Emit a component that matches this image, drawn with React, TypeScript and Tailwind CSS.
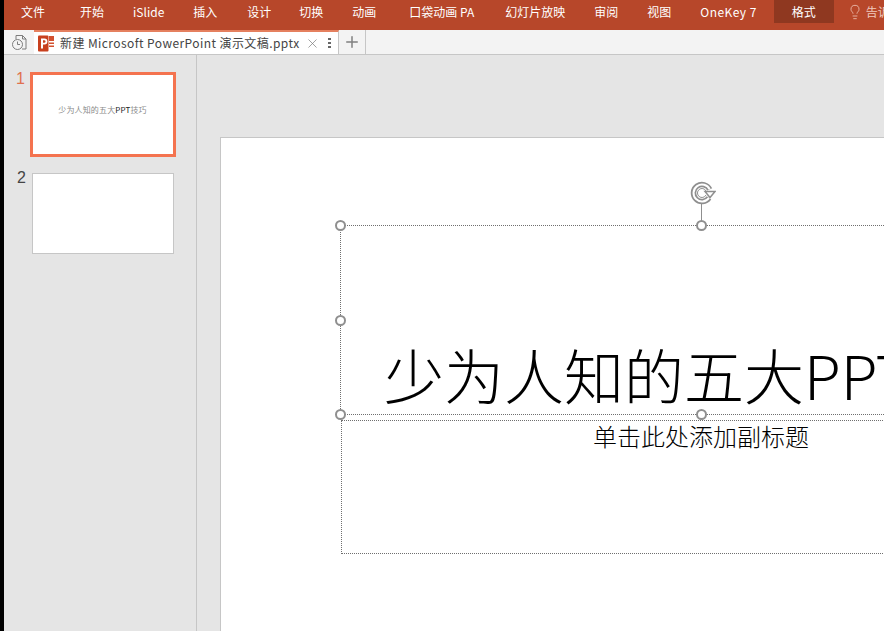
import { Lightbulb, Plus, X } from 'lucide-react'

const cjk = { fontFamily: '"Noto Sans CJK SC", "Noto Sans", sans-serif' }

const menus = [
  { label: '文件', cls: 'mr-[6px]' },
  { label: '开始', cls: '' },
  { label: 'iSlide', cls: '' },
  { label: '插入', cls: '' },
  { label: '设计', cls: 'ml-px -mr-px' },
  { label: '切换', cls: '' },
  { label: '动画', cls: 'mr-[4px]' },
  { label: '口袋动画 PA', cls: 'mr-[2px]' },
  { label: '幻灯片放映', cls: '' },
  { label: '审阅', cls: '' },
  { label: '视图', cls: '' },
  { label: 'OneKey 7', cls: 'tracking-[0.45px]' },
]

function SelectionHandle({ className }: { className: string }) {
  return (
    <span className={`absolute h-[11px] w-[11px] rounded-full border-2 border-[#8f8f8f] bg-white ${className}`} />
  )
}

function RotateIcon() {
  const arc = 'M19.7 8.4A8.5 8.5 0 1 0 19 16.9'
  const inner = 'M16 10A4.5 4.5 0 1 0 16 14'
  return (
    <svg viewBox="0 0 26 24" className="h-[24px] w-[26px]" fill="none">
      <path d={arc} stroke="#8f8f8f" strokeWidth="5.5" />
      <path d={arc} stroke="#fff" strokeWidth="2" />
      <path d={inner} stroke="#8f8f8f" strokeWidth="1" />
      <path d="M15 10.5h10l-5 6z" fill="#fff" stroke="#8f8f8f" strokeWidth="1.5" />
    </svg>
  )
}

function PptIcon() {
  return (
    <svg viewBox="0 0 17 17" className="h-[17px] w-[17px] shrink-0">
      <rect x="11" y="1" width="5" height="5" fill="#d2502f" />
      <rect x="11" y="7.5" width="5" height="1.5" fill="#d2502f" />
      <rect x="11" y="10.5" width="5" height="1.5" fill="#d2502f" />
      <rect x="0" y="0.5" width="10.5" height="16" rx="1" fill="#c8401e" />
      <path d="M3 13.5V3.5h3.4a2.9 2.9 0 0 1 0 6H5v4z" fill="#fff" />
      <path d="M5 5.2v2.6h1.2a1.3 1.3 0 0 0 0-2.6z" fill="#c8401e" />
    </svg>
  )
}

function HistoryIcon() {
  return (
    <svg viewBox="0 0 17 17" className="h-[17px] w-[17px]" fill="none" stroke="#7d7d7d" strokeWidth="1">
      <path d="M5 5V1.5h6.5L15 5v10H11" />
      <path d="M11.5 1.5V5H15" />
      <circle cx="6.5" cy="10.5" r="5" fill="#f3f3f3" />
      <path d="M6.5 7.5v3h2.5" />
    </svg>
  )
}

export default function App() {
  return (
    <div className="flex h-[631px] w-[884px] overflow-hidden bg-black" style={cjk}>
      <div className="ml-1 flex w-[880px] shrink-0 flex-col">
        {/* ribbon tabs */}
        <div className="flex h-[30px] shrink-0 items-start bg-[#b7472a] pl-[17px] text-[12px] text-white">
          <div className="flex h-[23px] shrink-0 items-center gap-[29px]">
            {menus.map((m) => (
              <span key={m.label} className={`whitespace-nowrap ${m.cls}`}>{m.label}</span>
            ))}
          </div>
          <div className="ml-[17px] flex h-[23px] w-[60px] shrink-0 items-center justify-center bg-[#8f3820]">格式</div>
          <div className="ml-[13px] flex h-[23px] shrink-0 items-center gap-[3px] whitespace-nowrap text-[#f0c9bd]">
            <Lightbulb size={16} strokeWidth={1.2} />
            <span>告诉我</span>
          </div>
        </div>

        {/* document tabs */}
        <div className="flex h-[25px] shrink-0 border-b border-[#c6c6c6] bg-[#f3f3f3]">
          <div className="flex w-[30px] shrink-0 items-center justify-center pl-[1px]">
            <HistoryIcon />
          </div>
          <div className="flex w-[305px] shrink-0 items-center border-t-2 border-r border-t-[#e5805f] border-r-[#c6c6c6] bg-white pl-[4px] text-[12px] text-[#444]">
            <PptIcon />
            <span className="ml-[5px] whitespace-nowrap tracking-[0.42px]">新建 Microsoft PowerPoint 演示文稿.pptx</span>
            <X size={15} strokeWidth={1.1} className="ml-[5px] shrink-0 text-[#777]" />
            <span className="ml-[8px] flex flex-col gap-[2px]">
              <span className="h-[2px] w-[3px] bg-[#666]" />
              <span className="h-[2px] w-[3px] bg-[#666]" />
              <span className="h-[2px] w-[3px] bg-[#666]" />
            </span>
          </div>
          <div className="flex w-[27px] shrink-0 items-center justify-center border-r border-[#c6c6c6]">
            <Plus size={18} strokeWidth={2} className="text-[#808080]" />
          </div>
        </div>

        <div className="flex min-h-0 flex-1">
          {/* thumbnails */}
          <div className="flex w-[193px] shrink-0 flex-col border-r border-[#c6c6c6] bg-[#e5e5e5] pl-[26px] pt-[17px]">
            <div className="relative h-[85px] w-[146px] border-[3px] border-[#f4734f] bg-white">
              <span className="absolute -left-[17px] -top-[5px] text-[16px] leading-[18px] text-[#e0704f]" style={{ fontFamily: '"Liberation Sans", sans-serif' }}>1</span>
              <div className="flex h-full items-center justify-center pb-[9px] pr-[1px] text-[8px] whitespace-nowrap tracking-[0.15px] text-[#8a8a8a]">
                少为人知的五大<span className="text-[#222]">PPT</span>技巧
              </div>
            </div>
            <div className="relative ml-[2px] mt-[16px] h-[81px] w-[142px] border border-[#c6c6c6] bg-white">
              <span className="absolute -left-[16px] -top-[5px] text-[16px] leading-[18px] text-[#444]" style={{ fontFamily: '"Liberation Sans", sans-serif' }}>2</span>
            </div>
          </div>

          {/* slide canvas */}
          <div className="min-w-0 flex-1 overflow-hidden bg-[#e5e5e5] pl-[23px] pt-[82px]">
            <div className="relative h-[600px] w-[1000px] border border-[#c6c6c6] bg-white">
              {/* title placeholder */}
              <div className="absolute left-[119px] top-[87px] h-[190px] w-[722px] border border-dotted border-[#6f6f6f]">
                <div className="absolute left-[43px] top-[106px] whitespace-nowrap text-[60px] font-extralight leading-[84px] text-black">
                  少为人知的五大PPT技巧
                </div>
                <SelectionHandle className="-left-[6px] -top-[6px]" />
                <SelectionHandle className="left-[355px] -top-[6px]" />
                <SelectionHandle className="-left-[6px] top-[89px]" />
                <SelectionHandle className="-left-[6px] top-[183px]" />
                <SelectionHandle className="left-[355px] top-[183px]" />
                <span className="absolute left-[360px] -top-[23px] h-[18px] w-px bg-[#8f8f8f]" />
                <span className="absolute left-[349px] -top-[45px]"><RotateIcon /></span>
              </div>
              {/* subtitle placeholder */}
              <div className="absolute left-[120px] top-[282px] flex h-[134px] w-[720px] justify-center border border-dotted border-[#6f6f6f] text-[24px] font-light leading-[30px] text-black">
                <span className="whitespace-nowrap">单击此处添加副标题</span>
              </div>
            </div>
          </div>
        </div>
      </div>
    </div>
  )
}
